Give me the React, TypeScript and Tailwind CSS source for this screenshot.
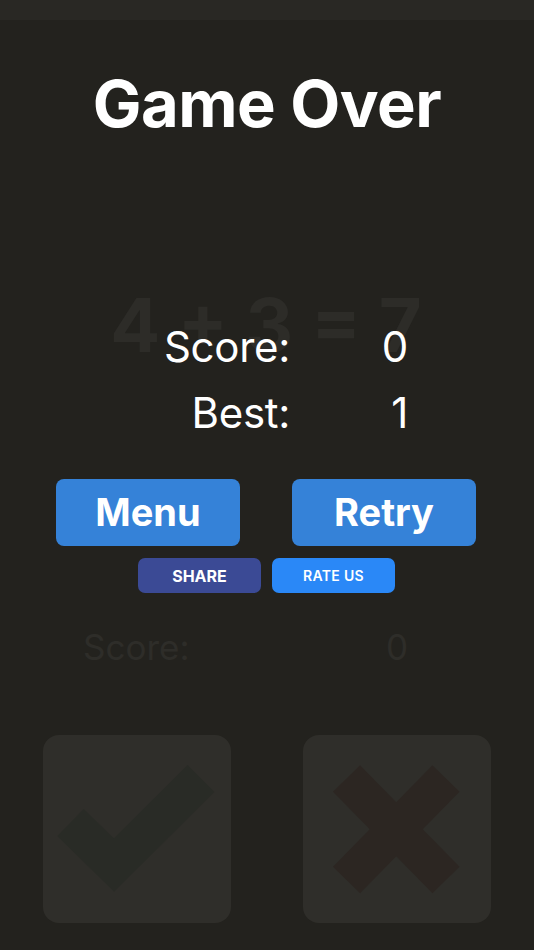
import React from "react";

const font = { fontFamily: "Inter, 'Noto Sans', sans-serif" };

function CheckTile() {
  return (
    <div className="w-[188px] h-[188px] rounded-[16px] bg-[#2f2e2a]">
      <svg width="188" height="188" viewBox="0 0 188 188">
        <polyline
          points="27.5,87.5 71,130 158,43.5"
          fill="none"
          stroke="#292b26"
          strokeWidth="38"
          strokeLinejoin="miter"
        />
      </svg>
    </div>
  );
}

function CrossTile() {
  return (
    <div className="w-[188px] h-[188px] rounded-[16px] bg-[#2f2e2a]">
      <svg width="188" height="188" viewBox="0 0 188 188">
        <g stroke="#2c2622" strokeWidth="38">
          <line x1="43.5" y1="43.5" x2="143" y2="145" />
          <line x1="143" y1="43.5" x2="43.5" y2="145" />
        </g>
      </svg>
    </div>
  );
}

export default function App() {
  const score = 0;
  const best = 1;

  return (
    <div className="w-[534px] h-[950px] bg-[#23221e] flex flex-col overflow-hidden" style={font}>
      <div className="h-5 bg-[#292824]" />

      <h1 className="mt-[51px] text-center text-white font-bold text-[65px] leading-none tracking-[-0.5px]">
        Game Over
      </h1>

      {/* final score, drawn over the last equation */}
      <div className="relative mt-[190px]">
        <div className="absolute left-0 right-0 top-[-38px] text-center text-[#2d2c28] font-bold text-[74px] leading-none">
          <span className="ml-[-2px]">4 + 3 = 7</span>
        </div>
        <div className="relative flex flex-col gap-[24px] text-white text-[42px] leading-none tracking-[-0.3px]">
          <div className="flex">
            <span className="w-[290px] text-right">Score:</span>
            <span className="w-[118px] text-right">{score}</span>
          </div>
          <div className="flex">
            <span className="w-[290px] text-right">Best:</span>
            <span className="w-[118px] text-right">{best}</span>
          </div>
        </div>
      </div>

      <div className="mt-[45px] flex pl-[56px] gap-[52px]">
        <button className="w-[184px] h-[67px] rounded-[8px] bg-[#3582d8] text-white font-bold text-[38px]">
          Menu
        </button>
        <button className="w-[184px] h-[67px] rounded-[8px] bg-[#3582d8] text-white font-bold text-[38px]">
          Retry
        </button>
      </div>

      <div className="mt-[12px] flex pl-[138px] gap-[11px]">
        <button className="w-[123px] h-[35px] rounded-[7px] bg-[#3b4a95] text-white font-bold text-[16px]">
          SHARE
        </button>
        <button className="w-[123px] h-[35px] rounded-[7px] bg-[#2a88f7] text-white font-semibold text-[14px] tracking-[0.3px]">
          RATE US
        </button>
      </div>

      <div className="mt-[37px] flex text-[#2e2d29] text-[35px] leading-none">
        <span className="ml-[83px]">Score:</span>
        <span className="ml-auto mr-[126px]">0</span>
      </div>

      <div className="mt-[70px] flex pl-[43px] gap-[72px]">
        <CheckTile />
        <CrossTile />
      </div>
    </div>
  );
}
